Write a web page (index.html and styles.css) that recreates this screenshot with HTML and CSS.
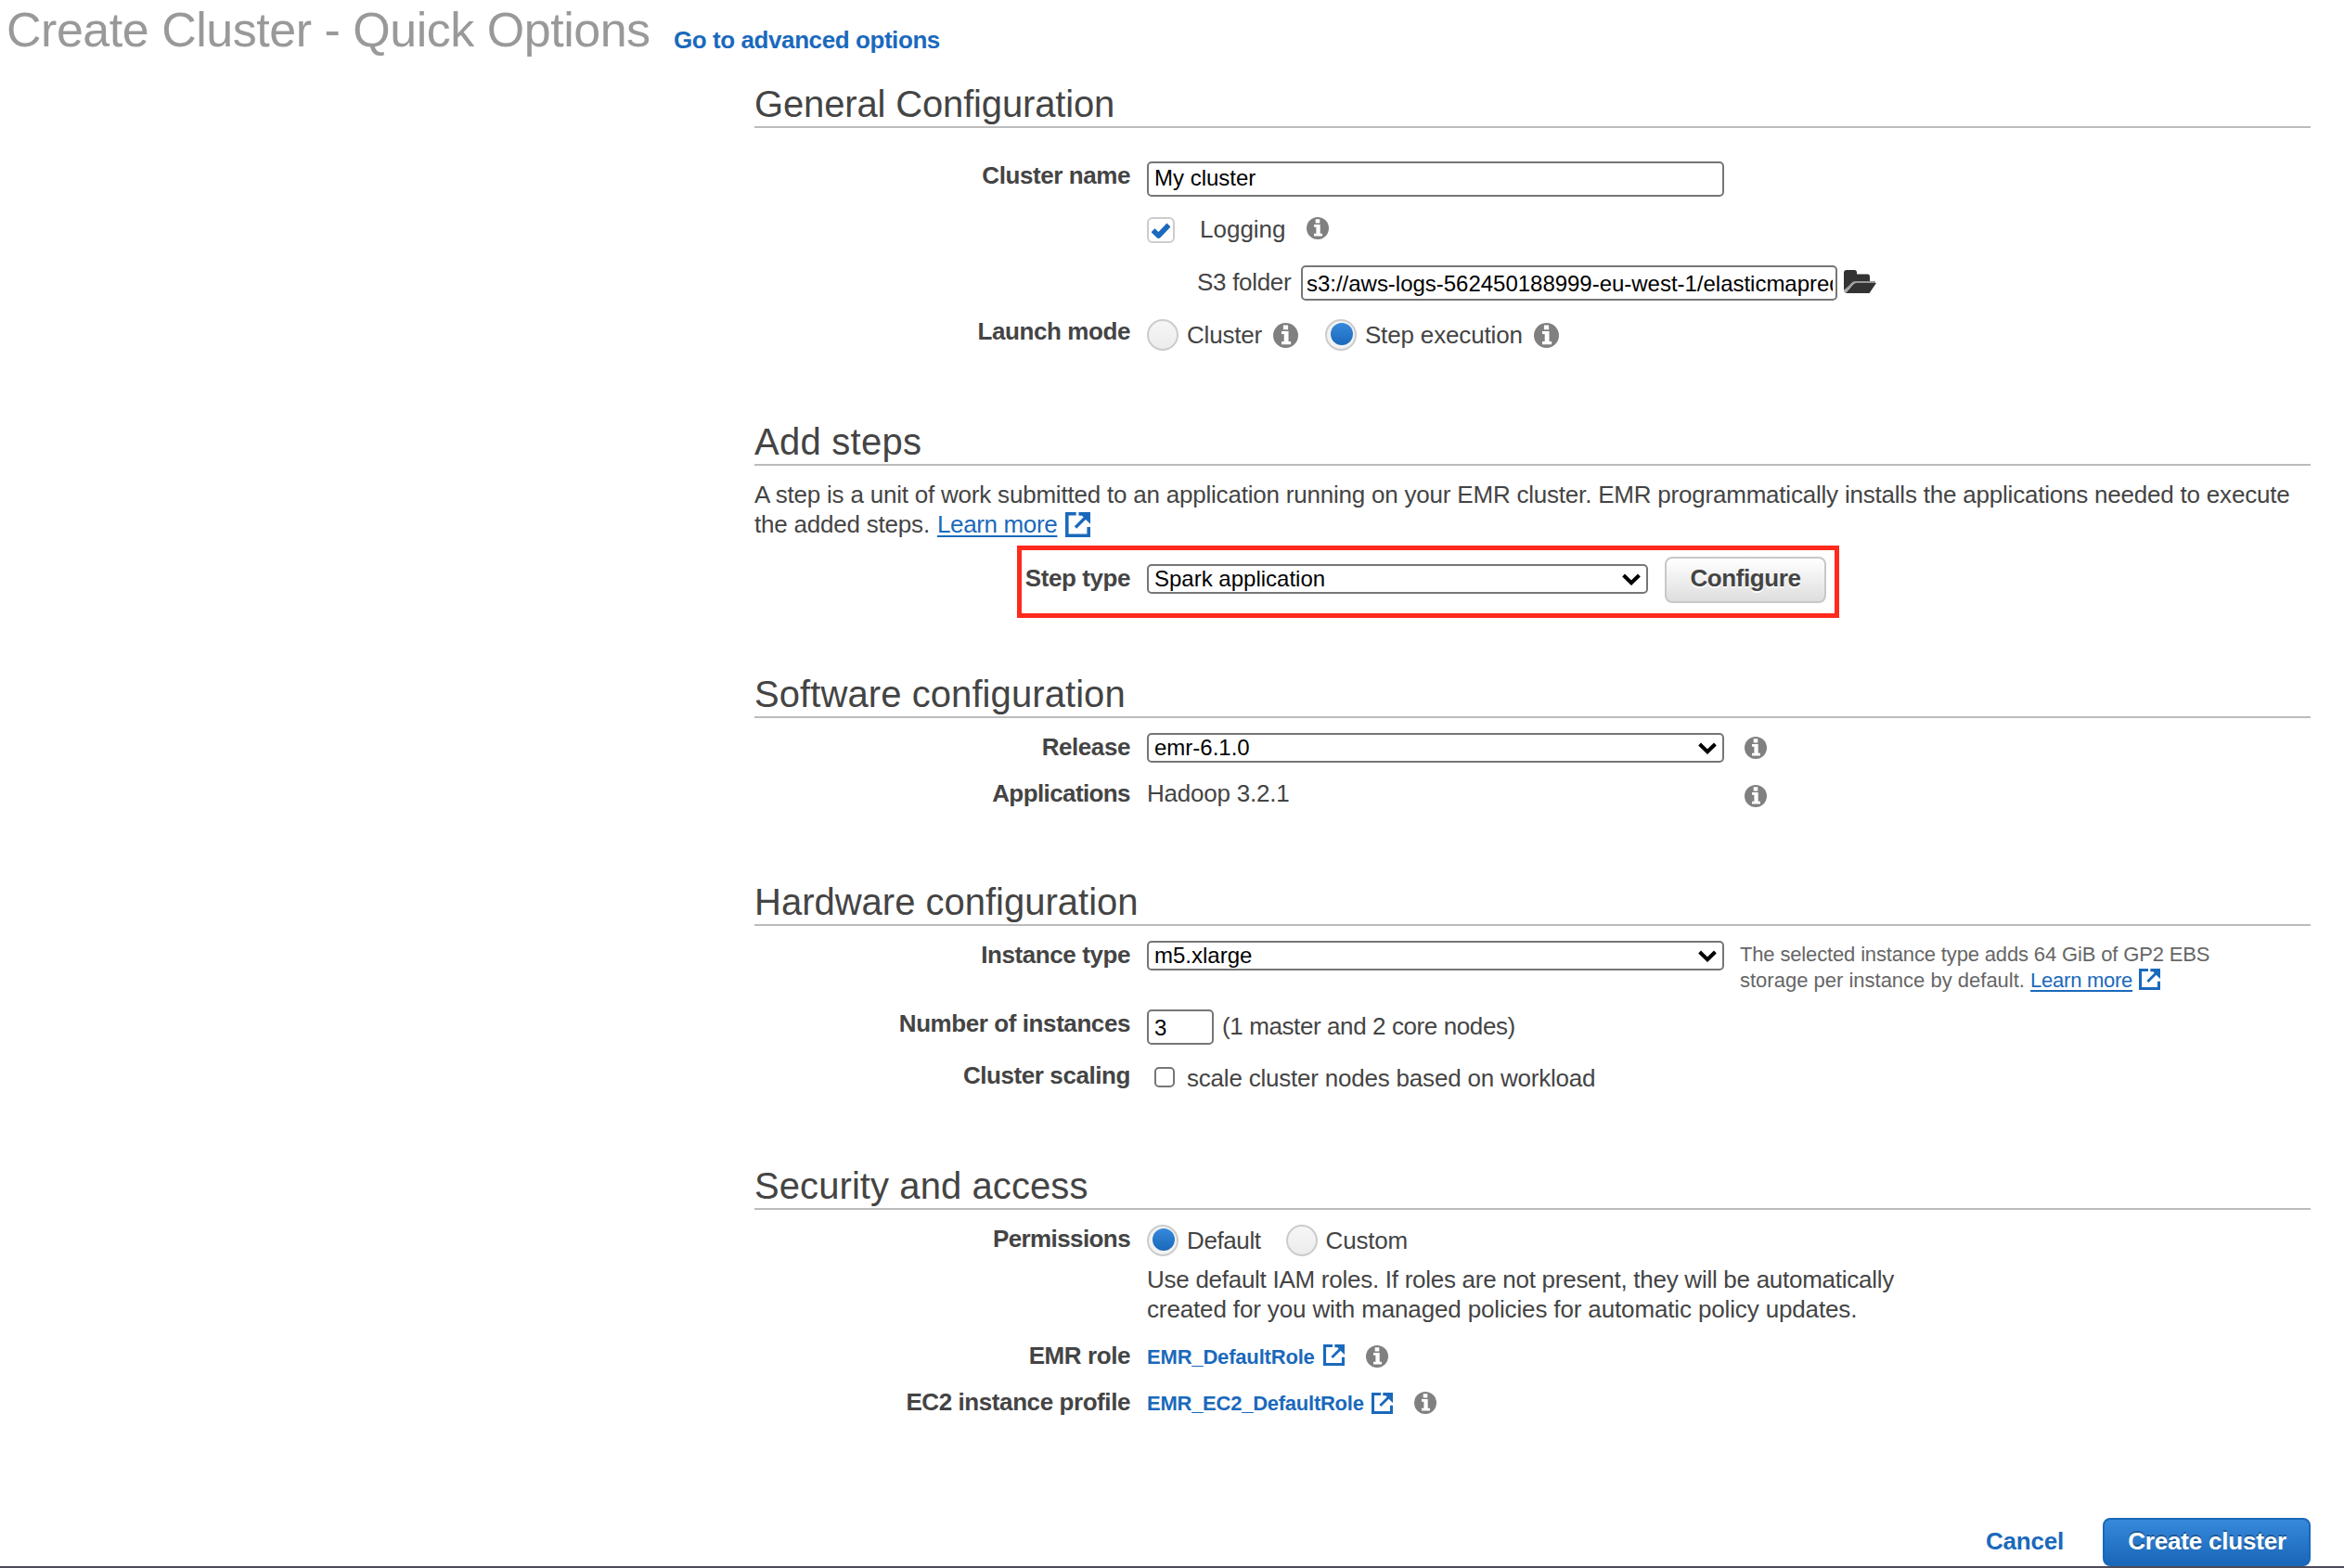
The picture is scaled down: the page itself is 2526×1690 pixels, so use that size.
FILE: index.html
```html
<!DOCTYPE html>
<html lang="en">
<head>
<meta charset="utf-8">
<title>Create Cluster - Quick Options</title>
<link rel="stylesheet" href="styles.css">
</head>
<body>
<svg class="defs" aria-hidden="true">
  <symbol id="info" viewBox="0 0 24 24">
    <circle cx="12" cy="12" r="12" fill="#808080"/>
    <path fill="#fff" d="M9.7 2.3h4.6v4.2H9.7zM8 8h6.7v9.7H17v2.9H8v-2.9h2.4v-7H8z"/>
  </symbol>
  <symbol id="ext" viewBox="0 0 27 27">
    <path fill="none" stroke="#1a69bc" stroke-width="3.6" d="M11.7 1.8H1.8v23.4h23.4V16"/>
    <path fill="none" stroke="#1a69bc" stroke-width="3.4" d="M11 16.5 22.5 5"/>
    <path fill="#1a69bc" d="M14.5 0H27v12.8L23 9l-5-5.200h-3.500z"/>
  </symbol>
  <symbol id="chevron" viewBox="0 0 20 13">
    <path fill="none" stroke="#000" stroke-width="4" d="M1.600 2 10 10.200 18.400 2"/>
  </symbol>
</svg>
<header class="page-head">
  <h1>Create Cluster - Quick Options</h1>
  <a class="advanced">Go to advanced options</a>
</header>
<main>
  <section class="general">
    <h2>General Configuration</h2>
    <div class="row row-name">
      <label class="label mt1">Cluster name</label>
      <input class="field field-name mt2" type="text" value="My cluster">
    </div>
    <div class="row row-logging">
      <span class="label"></span>
      <span class="tick mt3"><svg viewBox="0 0 20 17"><path fill="none" stroke="#1a69bc" stroke-width="5.600" stroke-linejoin="round" d="M1.500 8.200 7.500 14 18.500 2.500"/></svg></span>
      <span class="text logging wide">Logging</span>
      <svg class="info mt3"><use href="#info"/></svg>
    </div>
    <div class="row row-folder">
      <span class="label"></span>
      <span class="text s3 mt2">S3 folder</span>
      <input class="field field-s3" type="text" value="s3://aws-logs-562450188999-eu-west-1/elasticmapreduce/">
      <svg class="folder mt5" viewBox="0 0 35 25"><path fill="#333" d="M0 22V3q0-3 3-3h8.500q2.500 0 2.500 3v1.500h12q2 0 2 2.500v5.500H13q-3 0-5 2.500z"/><path fill="#333" d="M2 25 10 15.500q1.200-1.500 3-1.500H35L27.500 25z"/><path fill="none" stroke="#999" stroke-width="2" d="M.8 24 8.500 15q1.500-2 4-2H34"/></svg>
    </div>
    <div class="row">
      <label class="label">Launch mode</label>
      <span class="radio mt3"></span>
      <span class="text opt mt4">Cluster</span>
      <svg class="info big mt7 gap-cluster"><use href="#info"/></svg>
      <span class="radio on mt3 gap-step"></span>
      <span class="text opt step-exec mt4">Step execution</span>
      <svg class="info big mt7 gap-exec"><use href="#info"/></svg>
    </div>
  </section>

  <section class="steps">
    <h2>Add steps</h2>
    <p class="intro">A step is a unit of work submitted to an application running on your EMR cluster. EMR programmatically installs the applications needed to execute<br>the added steps. <a class="under">Learn more</a> <svg class="ext ext-l"><use href="#ext"/></svg></p>
    <div class="row row-step">
      <label class="label">Step type</label>
      <div class="select select-step">Spark application<svg class="chev"><use href="#chevron"/></svg></div>
      <button class="btn configure">Configure</button>
      <div class="highlight"></div>
    </div>
  </section>

  <section class="software">
    <h2>Software configuration</h2>
    <div class="row row-50">
      <label class="label">Release</label>
      <div class="select mt1">emr-6.1.0<svg class="chev"><use href="#chevron"/></svg></div>
      <svg class="info side mt5"><use href="#info"/></svg>
    </div>
    <div class="row">
      <label class="label tight">Applications</label>
      <span class="text apps">Hadoop 3.2.1</span>
      <svg class="info side mt7"><use href="#info"/></svg>
    </div>
  </section>

  <section class="hardware">
    <h2>Hardware configuration</h2>
    <div class="row row-type">
      <label class="label mt1">Instance type</label>
      <div class="select mt2">m5.xlarge<svg class="chev"><use href="#chevron"/></svg></div>
      <p class="note mt3">The selected instance type adds 64 GiB of GP2 EBS<br><span class="wide">storage per instance by default. </span><a class="under">Learn more</a> <svg class="ext ext-m"><use href="#ext"/></svg></p>
    </div>
    <div class="row row-count">
      <label class="label">Number of instances</label>
      <input class="field field-count mt1" type="text" value="3">
      <span class="text nodes mt3">(1 master and 2 core nodes)</span>
    </div>
    <div class="row">
      <label class="label">Cluster scaling</label>
      <span class="box mt7"></span>
      <span class="text scale mt3">scale cluster nodes based on workload</span>
    </div>
  </section>

  <section class="security">
    <h2>Security and access</h2>
    <div class="row row-perm">
      <label class="label tight">Permissions</label>
      <span class="radio on mt1"></span>
      <span class="text opt default mt2">Default</span>
      <span class="radio mt1 gap-custom"></span>
      <span class="text opt mt2">Custom</span>
    </div>
    <div class="row row-desc">
      <span class="label"></span>
      <p class="text first">Use default IAM roles. If roles are not present, they will be automatically<br><span class="second">created for you with managed policies for automatic policy updates.</span></p>
    </div>
    <div class="row row-50">
      <label class="label">EMR role</label>
      <a class="role mt2">EMR_DefaultRole</a>
      <svg class="ext ext-r mt4"><use href="#ext"/></svg>
      <svg class="info mt5"><use href="#info"/></svg>
    </div>
    <div class="row row-50">
      <label class="label">EC2 instance profile</label>
      <a class="role role-ec2 mt2">EMR_EC2_DefaultRole</a>
      <svg class="ext ext-r mt6"><use href="#ext"/></svg>
      <svg class="info mt5"><use href="#info"/></svg>
    </div>
  </section>
</main>
<footer>
  <a class="cancel">Cancel</a>
  <button class="btn create">Create cluster</button>
</footer>
</body>
</html>
```
FILE: styles.css
```css
* { box-sizing: border-box; margin: 0; padding: 0; }
html, body { height: 1690px; overflow: hidden; }
body {
  display: flex;
  flex-direction: column;
  background: #fff;
  color: #444;
  font: 26px/32px "Liberation Sans", Arial, sans-serif;
  letter-spacing: -0.21px;
  border-bottom: 2px solid #4b4b59;
}
.defs { display: none; }
svg { flex: none; display: block; }
h1, h2 { font-weight: 400; white-space: nowrap; }
.page-head { display: flex; height: 89px; flex: none; padding-left: 7px; }
h1 { width: 719px; font-size: 52px; line-height: 65px; letter-spacing: -0.48px; color: #999; }
.advanced { margin-top: 27px; font-weight: 700; letter-spacing: -0.42px; color: #1a69bc; }

main { width: 1677px; margin-left: 813px; flex: none; }
section { overflow: hidden; }
h2 { height: 49px; font-size: 40px; line-height: 46px; letter-spacing: 0.08px; border-bottom: 2px solid #bbb; }
.general { height: 364px; }
.general h2 { letter-spacing: -0.15px; }
.steps { height: 272px; }
.steps h2 { letter-spacing: 0.25px; }
.software { height: 224px; }
.hardware { height: 306px; }
.hardware h2 { letter-spacing: 0; }
.security { height: 310px; }

.row { display: flex; align-items: flex-start; position: relative; white-space: nowrap; }
.label { width: 405px; margin-right: 18px; flex: none; text-align: right; font-weight: 700; letter-spacing: -0.42px; }
.tight { letter-spacing: -0.6px; }
.row > .text, .row > .radio, .row > .select, .field, .row > a { flex: none; }
.wide { letter-spacing: 0; }

.row-name { height: 59px; }
.general .row-name { margin-top: 34px; }
.row-logging { height: 55px; }
.row-folder { height: 55px; }
.row-step { height: 137px; margin-top: 7px; }
.row-50 { height: 50px; }
.software h2 { margin-bottom: 15px; }
.hardware h2 { margin-bottom: 14px; }
.security h2 { margin-bottom: 15px; }
.row-type { height: 75px; }
.row-count { height: 56px; }
.row-perm { height: 44px; }
.row-desc { height: 82px; }

.mt1 { margin-top: 1px; }
.mt2 { margin-top: 2px; }
.mt3 { margin-top: 3px; }
.mt4 { margin-top: 4px; }
.mt5 { margin-top: 5px; }
.mt6 { margin-top: 6px; }
.mt7 { margin-top: 7px; }

.field {
  width: 622px; height: 38px; padding: 0 6px 2px;
  border: 2px solid #767676; border-radius: 5px; background: #fff;
  color: #000; font: 24px "Liberation Sans", Arial, sans-serif; outline: 0;
}
.field-s3 { width: 578px; padding: 2px 3px 0 4px; letter-spacing: -0.02px; }
.field-count { width: 72px; padding-top: 2px; padding-bottom: 0; }
.select {
  display: flex; justify-content: space-between; width: 622px; height: 32px; padding: 0 6px;
  border: 2px solid #767676; border-radius: 5px; color: #000;
  font-size: 24px; line-height: 28px; letter-spacing: 0;
}
.select-step { width: 540px; margin-top: 20px; }
.chev { width: 20px; height: 13px; margin-top: 8px; }

.tick { width: 30px; height: 28px; flex: none; border: 2px solid #ccc; border-radius: 6px; padding: 4px 3px; }
.tick svg { width: 20px; height: 17px; }
.logging { width: 115px; margin-left: 27px; }
.s3 { width: 112px; margin-left: 54px; letter-spacing: -0.3px; }
.folder { width: 35px; height: 25px; margin-left: 7px; }
.info { width: 24px; height: 24px; }
.info.big { width: 27px; height: 27px; }
.radio { width: 34px; height: 34px; border: 2px solid #ccc; border-radius: 50%; background: linear-gradient(#f6f6f6, #ececec); }
.radio.on { display: flex; justify-content: center; padding-top: 2px; background: #f2f2f2; }
.radio.on::before { content: ""; width: 24px; height: 24px; margin-left: 2px; border-radius: 50%; background: linear-gradient(#3689dc, #1a68ba); }
.opt { margin-left: 9px; }
.default { letter-spacing: -0.4px; }
.step-exec { letter-spacing: -0.15px; }
.gap-cluster { margin-left: 12px; }
.gap-step { margin-left: 29px; }
.gap-exec { margin-left: 12px; }
.gap-custom { margin-left: 27px; }

.intro { margin-top: 15px; height: 64px; white-space: nowrap; }
.under { color: #1a69bc; text-decoration: underline; text-decoration-thickness: 2px; text-underline-offset: 3px; }
.ext { display: inline-block; }
.intro .under { letter-spacing: -0.35px; margin-left: 1px; }
.ext-l { width: 27px; height: 27px; margin-left: 2px; vertical-align: -5px; }
.ext-m { width: 23px; height: 23px; margin-left: 1px; vertical-align: -3px; }
.ext-r { width: 23px; height: 23px; margin-right: 23px; }
.highlight { position: absolute; left: 283px; top: 0; width: 886px; height: 78px; border: 5px solid #ff2a1c; }
.row-step .label { margin-top: 19px; }
.btn { font: 700 26px/32px "Liberation Sans", Arial, sans-serif; letter-spacing: -0.4px; white-space: nowrap; flex: none; }
.configure {
  width: 174px; height: 50px; margin: 12px 0 0 18px; padding-bottom: 4px;
  border: 2px solid #c8c8c8; border-radius: 8px; color: #444;
  background: linear-gradient(#fff, #dedede); text-shadow: 0 2px 0 #fff;
}
.apps { width: 622px; }
.side { margin-left: 22px; }
.note { margin-left: 17px; font-size: 22px; line-height: 28px; letter-spacing: -0.15px; color: #666; }
.note .under { letter-spacing: -0.25px; }
.nodes { margin-left: 9px; letter-spacing: -0.4px; }
.box { width: 22px; height: 22px; margin-left: 8px; flex: none; border: 2px solid #767676; border-radius: 5px; }
.scale { margin-left: 13px; }
.first { letter-spacing: -0.27px; }
.second { letter-spacing: -0.14px; }
.role { width: 190px; font-size: 22px; font-weight: 700; letter-spacing: -0.18px; color: #1a69bc; }
.role-ec2 { width: 242px; letter-spacing: -0.25px; }

footer { display: flex; flex: none; align-items: flex-start; justify-content: flex-end; padding-right: 36px; margin-top: 71px; height: 52px; }
.cancel { margin: 9px 42px 0 0; font-weight: 700; color: #1a69bc; }
.create {
  width: 224px; height: 52px; padding: 0 0 2px 1px; border: 2px solid #1a68ba; border-radius: 8px; color: #fff;
  background: linear-gradient(#3689dc, #1a66b8); text-shadow: 0 -2px 0 rgba(0, 0, 0, 0.3); letter-spacing: -0.2px;
}
```
